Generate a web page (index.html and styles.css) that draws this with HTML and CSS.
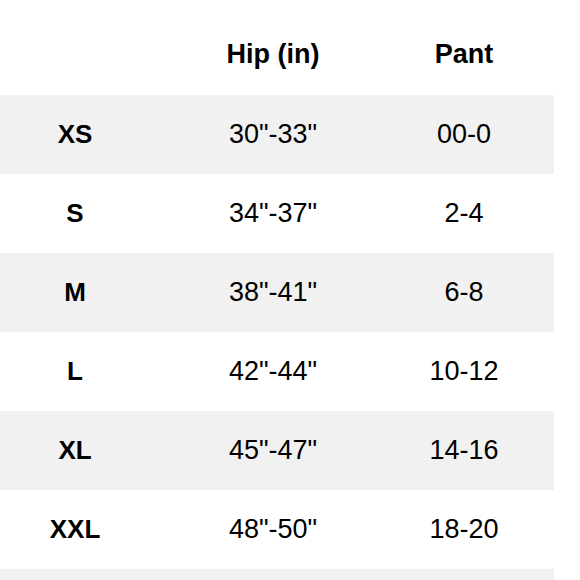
FILE: index.html
```html
<!DOCTYPE html>
<html>
<head>
<meta charset="utf-8">
<link rel="stylesheet" href="styles.css">
</head>
<body>
<div class="chart">
  <div class="row head">
    <div class="cell"></div>
    <div class="cell">Hip (in)</div>
    <div class="cell">Pant</div>
  </div>
  <div class="row shade">
    <div class="cell size">XS</div>
    <div class="cell">30"-33"</div>
    <div class="cell">00-0</div>
  </div>
  <div class="row">
    <div class="cell size">S</div>
    <div class="cell">34"-37"</div>
    <div class="cell">2-4</div>
  </div>
  <div class="row shade">
    <div class="cell size">M</div>
    <div class="cell">38"-41"</div>
    <div class="cell">6-8</div>
  </div>
  <div class="row">
    <div class="cell size">L</div>
    <div class="cell">42"-44"</div>
    <div class="cell">10-12</div>
  </div>
  <div class="row shade">
    <div class="cell size">XL</div>
    <div class="cell">45"-47"</div>
    <div class="cell">14-16</div>
  </div>
  <div class="row">
    <div class="cell size">XXL</div>
    <div class="cell">48"-50"</div>
    <div class="cell">18-20</div>
  </div>
  <div class="row shade tail"></div>
</div>
</body>
</html>
```
FILE: styles.css
```css
html, body {
  margin: 0;
  padding: 0;
  background: #ffffff;
}
body {
  font-family: "Liberation Sans", Arial, Helvetica, sans-serif;
  color: #000;
  width: 580px;
  height: 580px;
  overflow: hidden;
}
.chart {
  width: 554px;
  display: flex;
  flex-direction: column;
}
.row {
  display: grid;
  grid-template-columns: 150px 246px 136px;
  height: 79px;
  align-items: center;
  font-size: 27px;
}
.row.head {
  height: 95px;
  box-sizing: border-box;
  padding-top: 14px;
  font-weight: bold;
}
.row.tail {
  height: 11px;
}
.shade {
  background: #f1f1f1;
}
.cell {
  text-align: center;
}
.size {
  font-weight: bold;
  font-size: 26px;
}
```
